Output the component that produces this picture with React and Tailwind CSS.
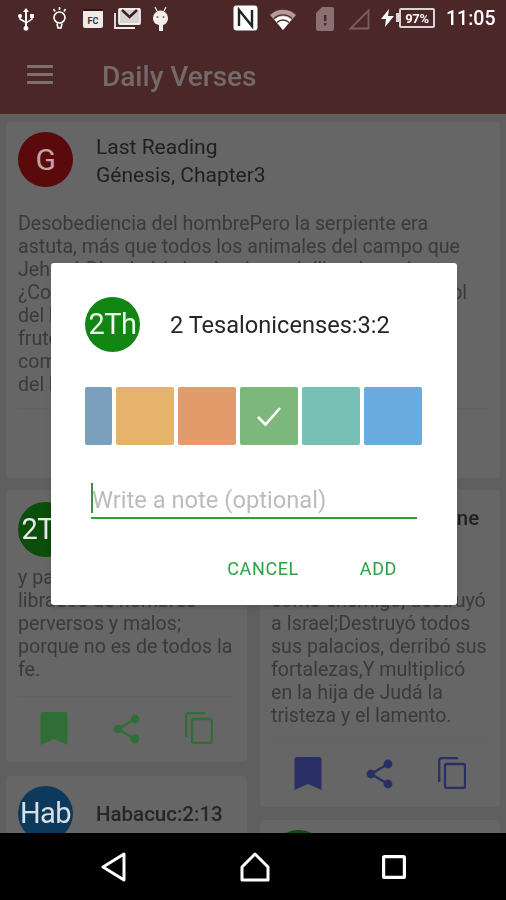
const roboto = "font-['Roboto',sans-serif]";

function Avatar({ bg, text, size = "text-[29px]", color = "text-[#e8e8e8]" }) {
  return (
    <div className={`w-[55px] h-[55px] rounded-full shrink-0 flex items-center justify-center overflow-hidden tracking-[-0.5px] ${size} ${color}`} style={{ backgroundColor: bg }}>
      {text}
    </div>
  );
}

function Actions({ color, pt }) {
  return (
    <div className={`mx-[12px] border-t border-[#626262] flex justify-between px-[22px] ${pt}`}>
      <svg width="28" height="33" viewBox="0 0 28 33" fill={color}><path d="M3 0h22a2.500 2.500 0 0 1 2.500 2.500V33L14 27 .5 33V2.500A2.500 2.500 0 0 1 3 0z" /></svg>
      <svg width="28" height="30" viewBox="0 0 28 30" fill="none" stroke={color} strokeWidth="2.4" className="mt-[2px]">
        <circle cx="22" cy="5" r="3.200" fill={color} /><circle cx="5" cy="15" r="3.200" fill={color} /><circle cx="22" cy="25" r="3.200" fill={color} />
        <path d="M22 5 5 15l17 10" />
      </svg>
      <svg width="28" height="32" viewBox="0 0 28 32" fill="none" stroke={color} strokeWidth="2.300">
        <path d="M1.200 25V3.200a2 2 0 0 1 2-2H20" />
        <rect x="7" y="7" width="20" height="24" rx="2" />
      </svg>
    </div>
  );
}

function StatusIcons() {
  return (
    <>
      <svg className="absolute left-[17px] top-[7px]" width="18" height="25" viewBox="0 0 18 25" fill="#fff">
        <path d="M9 1l3 4h-2v14a2.500 2.500 0 1 1-2 0V5H6z" /><circle cx="3" cy="9" r="2" /><rect x="13" y="7" width="4" height="4" />
        <path d="M3 9v3l5 3M15 9v3l-6 4" stroke="#fff" strokeWidth="1.500" fill="none" />
      </svg>
      <svg className="absolute left-[51px] top-[6px]" width="17" height="25" viewBox="0 0 17 25" fill="none" stroke="#fff" strokeWidth="1.600">
        <circle cx="8.500" cy="11.500" r="5.500" /><path d="M6 17.500 7 22h3l1-4.500M8.500 1v3M2.500 3l1.500 2.500M14.500 3 13 5.500" />
      </svg>
      <div className="absolute left-[83px] top-[9px] w-[20px] h-[19px] bg-[#efeaea] rounded-[2px] border-t-2 border-[#3a1010] flex items-end justify-center text-[9px] leading-[12px] font-bold text-[#333] pb-[1px]">FC</div>
      <svg className="absolute left-[114px] top-[7px]" width="27" height="23" viewBox="0 0 27 23" fill="none" stroke="#eee" strokeWidth="1.800">
        <path d="M1 6v15h20" /><rect x="5" y="2" width="21" height="15" rx="1" fill="#d8d2d2" /><path d="M8 3l7.500 7L23 3" stroke="#3a1e1e" strokeWidth="2.400" />
      </svg>
      <svg className="absolute left-[152px] top-[6px]" width="17" height="26" viewBox="0 0 17 26" fill="#f2eeee">
        <path d="M1 12a7.500 7.500 0 0 1 15 0v1a7 7 0 0 1-5 6v6H7v-6a7 7 0 0 1-6-6z" /><path d="M3 1l2 4M14 1l-2 4" stroke="#f2eeee" strokeWidth="1.200" />
        <circle cx="5.500" cy="11" r="1.100" fill="#8a7070" /><circle cx="11.500" cy="11" r="1.100" fill="#8a7070" />
      </svg>
      <svg className="absolute left-[233px] top-[5px]" width="25" height="26" viewBox="0 0 25 26">
        <rect x="0.500" y="0.500" width="24" height="25" rx="3" fill="#fff" />
        <path d="M6 21V5l13 16V5" fill="none" stroke="#222" strokeWidth="2.400" />
      </svg>
      <svg className="absolute left-[270px] top-[9px]" width="26" height="22" viewBox="0 0 26 22">
        <path d="M0 6a19 19 0 0 1 26 0L13 21z" fill="#b49a9a" /><path d="M4.500 10.500a12.500 12.500 0 0 1 17 0L13 21z" fill="#fff" /><path d="M7 13.500a8.500 8.500 0 0 1 12 0" stroke="#4b2727" strokeWidth="1.300" fill="none" /><path d="M4 9.500a13 13 0 0 1 18 0" stroke="#4b2727" strokeWidth="1.300" fill="none" />
      </svg>
      <svg className="absolute left-[316px] top-[7px]" width="18" height="24" viewBox="0 0 18 24">
        <path d="M6 0h10a2 2 0 0 1 2 2v20a2 2 0 0 1-2 2H2a2 2 0 0 1-2-2V6z" fill="#8a7070" /><rect x="8" y="8" width="2.400" height="6" fill="#4b2727" /><rect x="8" y="16" width="2.400" height="2.400" fill="#4b2727" />
      </svg>
      <svg className="absolute left-[348px] top-[8px]" width="22" height="22" viewBox="0 0 22 22" fill="none" stroke="#7a5f5f" strokeWidth="1.800"><path d="M20.500 2.500v18H2.500z" /></svg>
      <svg className="absolute left-[381px] top-[9px]" width="13" height="18" viewBox="0 0 13 18" fill="#fff"><path d="M8 0 0 10h5l-1 8 9-11H7z" /></svg>
      <div className="absolute left-[396px] top-[13px] w-[3px] h-[9px] bg-[#d9d3d3]" />
      <div className="absolute left-[399px] top-[8px] w-[36px] h-[20px] border-[2px] border-[#d9d3d3] rounded-[2px] flex items-center justify-center text-[13px] leading-none font-bold text-white tracking-[-0.3px]">97%</div>
      <div className="absolute left-[446px] top-[7px] text-[19.5px] leading-[24px] font-medium text-white">11:05</div>
    </>
  );
}

export default function App() {
  return (
    <div className="bg-[#5f5f5f] w-[506px] h-[900px] overflow-hidden">
      <div className={`relative w-[506px] h-[900px] overflow-hidden flex flex-col blur-[0.4px] ${roboto}`}>
        <header className="relative shrink-0 h-[114px] bg-[#4b2727]">
          <StatusIcons />
          <div className="absolute left-[27px] top-[65px] w-[26px] flex flex-col gap-[5px]">
            <div className="h-[3px] bg-[#7c7070]" /><div className="h-[3px] bg-[#7c7070]" /><div className="h-[3px] bg-[#7c7070]" />
          </div>
          <div className="absolute left-[102px] top-[59px] text-[28px] leading-[36px] font-medium text-[#756a6a]">Daily Verses</div>
        </header>

        <main className="flex-1 min-h-0 overflow-hidden px-[6px] pt-[8px] flex flex-col gap-[12px]">
          <section className="shrink-0 h-[356px] bg-[#666666] rounded-[4px] px-[12px] pt-[10px]">
            <div className="flex gap-[23px]">
              <Avatar bg="#5a0a0a" text="G" size="text-[30px]" color="text-[#c0a5a5]" />
              <div className="text-[21px] leading-[28px] text-[#1f1f1f] pt-[1px]">
                <div>Last Reading</div><div>Génesis, Chapter3</div>
              </div>
            </div>
            <div className="mt-[23px] text-[19.6px] leading-[23px] text-[#3a3a3a] whitespace-nowrap">
              Desobediencia del hombrePero la serpiente era<br />
              astuta, más que todos los animales del campo que<br />
              Jehová Dios había hecho; la cual dijo a la mujer:<br />
              ¿Conque Dios os ha dicho: No comáis de todo árbol<br />
              del huerto? Y la mujer respondió a la serpiente:<br />
              fruto de los árboles del huerto podemos<br />
              comer; pero del fruto del árbol que está en medio<br />
              del huerto dijo Dios
            </div>
            <div className="mt-[12px] border-t border-[#626262]" />
          </section>

          <div className="flex-1 min-h-0 flex gap-[13px] items-start">
            <div className="w-[241px] flex flex-col gap-[14px]">
              <section className="bg-[#666666] rounded-[4px] pt-[12px] pb-[17px]">
                <div className="px-[12px]">
                  <Avatar bg="#0b4d0b" text="2Th" />
                  <div className="mt-[9px] text-[19.6px] leading-[23px] text-[#3a3a3a] whitespace-nowrap">
                    y para que seamos<br />librados de hombres<br />perversos y malos;<br />porque no es de todos la<br />fe.
                  </div>
                </div>
                <div className="mt-[15px]"><Actions color="#2f6e34" pt="pt-[15px]" /></div>
              </section>
              <section className="bg-[#666666] rounded-[4px] px-[12px] pt-[10px] h-[100px]">
                <div className="flex gap-[23px] items-center">
                  <Avatar bg="#0d3a5c" text="Hab" color="text-[#d8dfe5]" />
                  <div className="text-[20.5px] leading-[28px] font-medium text-[#262626]">Habacuc:2:13</div>
                </div>
              </section>
            </div>
            <div className="w-[240px] flex flex-col gap-[13px]">
              <section className="bg-[#666666] rounded-[4px] pt-[12px] pb-[17px]">
                <div className="px-[11px]">
                  <div className="flex gap-[23px] h-[55px]">
                    <Avatar bg="#0b4d0b" text="Lam" />
                    <div className="text-[20.5px] leading-[28px] font-medium text-[#1f1f1f] pt-[2px]">Lamentacione<br />s:2:5</div>
                  </div>
                  <div className="mt-[9px] text-[19.6px] leading-[23px] text-[#3a3a3a] whitespace-nowrap">
                    El Señor llegó a ser<br />como enemigo, destruyó<br />a Israel;Destruyó todos<br />sus palacios, derribó sus<br />fortalezas,Y multiplicó<br />en la hija de Judá la<br />tristeza y el lamento.
                  </div>
                </div>
                <div className="mt-[12px]"><Actions color="#2a2f66" pt="pt-[17px]" /></div>
              </section>
              <section className="bg-[#666666] rounded-[4px] h-[60px] px-[11px] pt-[10px]">
                <Avatar bg="#0b4d0b" text="" />
              </section>
            </div>
          </div>
        </main>

        <nav className="shrink-0 h-[67px] bg-black flex items-center justify-between px-[100px]">
          <svg width="28" height="30" viewBox="0 0 28 30" fill="none" stroke="#fff" strokeWidth="3" strokeLinejoin="round"><path d="M24 2v26L3 15z" /></svg>
          <svg width="30" height="30" viewBox="0 0 30 30" fill="none" stroke="#fff" strokeWidth="3" strokeLinejoin="round"><path d="M15 2 2 15v13h26V15z" /></svg>
          <svg width="24" height="24" viewBox="0 0 24 24" fill="none" stroke="#fff" strokeWidth="3.200"><rect x="1.600" y="1.600" width="20.800" height="20.800" rx="1" /></svg>
        </nav>

        <div className="absolute left-[51px] top-[263px] w-[406px] h-[342px] bg-white rounded-[3px] pl-[34px] pt-[34px] shadow-md">
          <div className="flex items-center gap-[30px]">
            <Avatar bg="#128512" text="2Th" color="text-[#eef6ee]" />
            <div className="text-[23.6px] leading-[30px] text-[#262626] pt-[1px]">2 Tesalonicenses:3:2</div>
          </div>
          <div className="mt-[35px] w-[337px] h-[58px] flex gap-[4px] overflow-hidden">
            <div className="w-[27px] rounded-[2px] bg-[#7ba0bd]" />
            <div className="w-[58px] rounded-[2px] bg-[#e5b36b]" />
            <div className="w-[58px] rounded-[2px] bg-[#e49b6c]" />
            <div className="w-[58px] rounded-[2px] bg-[#7cb87c] flex items-center justify-center">
              <svg width="26" height="22" viewBox="0 0 26 22" fill="none" stroke="#fff" strokeWidth="2.600"><path d="M2 12l7.500 7.500L24 3" /></svg>
            </div>
            <div className="w-[58px] rounded-[2px] bg-[#78c0b5]" />
            <div className="w-[58px] rounded-[2px] bg-[#6aabdd]" />
          </div>
          <div className="mt-[38px] ml-[6px] w-[326px] h-[36px] border-b-2 border-[#2e9e3a] relative flex items-start">
            <div className="w-[2px] h-[30px] bg-[#3c8f45] shrink-0" />
            <div className="text-[23.7px] leading-[34px] text-[#bcbcbc] -ml-[1px]">Write a note (optional)</div>
          </div>
          <div className="mt-[38px] flex justify-end gap-[61px] pr-[60px] text-[18px] leading-[24px] tracking-[0.6px] text-[#2fa043]">
            <span>CANCEL</span><span>ADD</span>
          </div>
        </div>
      </div>
    </div>
  );
}
